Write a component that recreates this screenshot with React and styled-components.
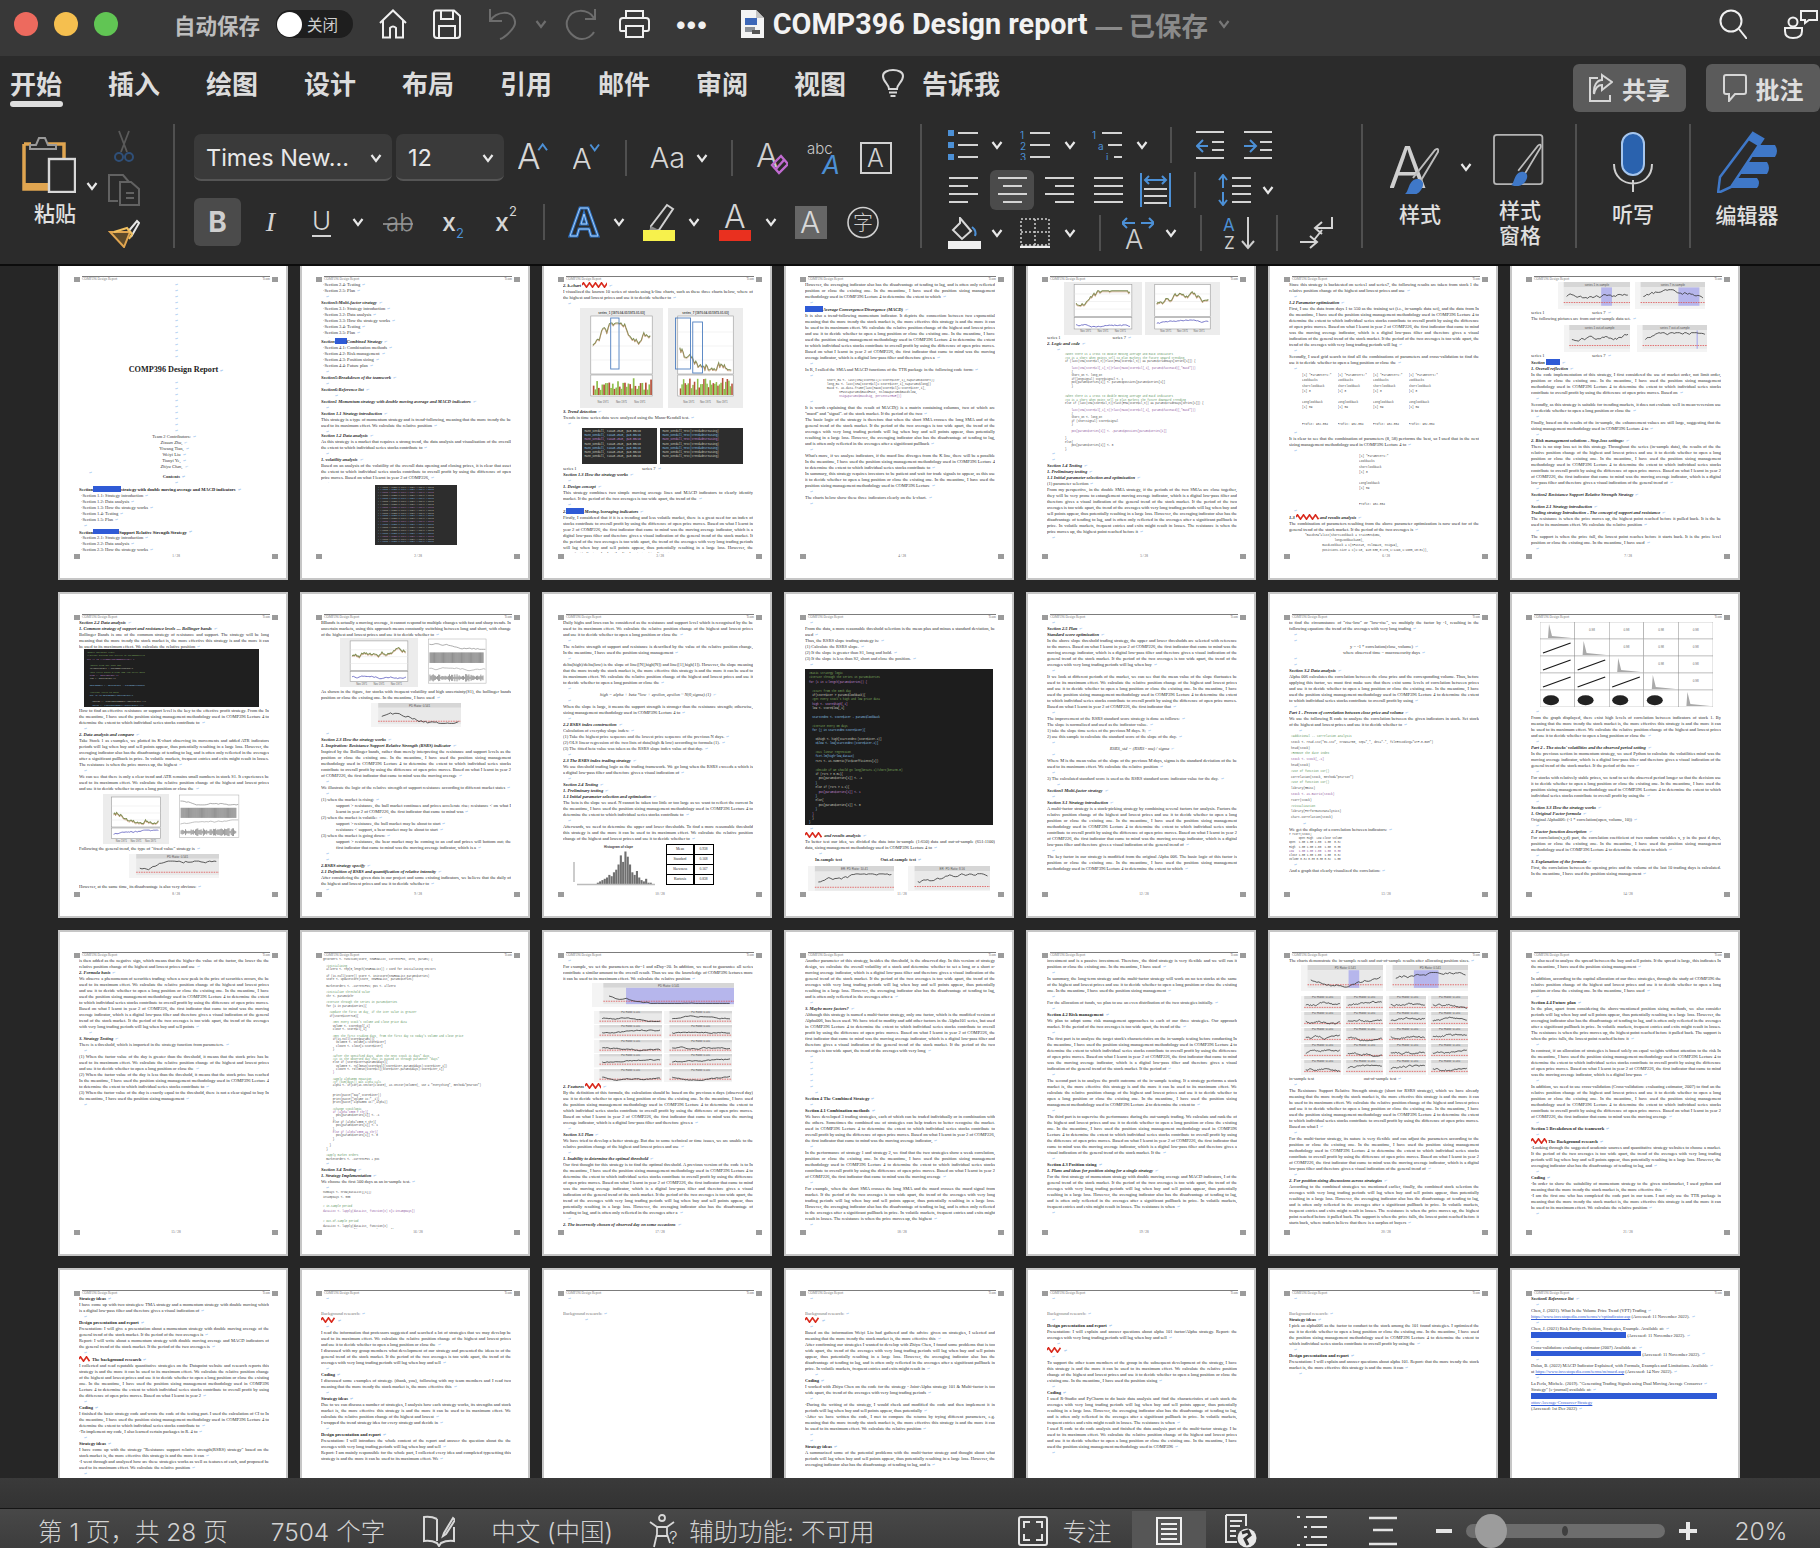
import React from 'react'
import styled, { createGlobalStyle } from 'styled-components'

const GlobalStyle = createGlobalStyle`
  html, body { margin: 0; padding: 0; background: #262626; }
  body { width: 1820px; height: 1548px; overflow: hidden; font-family: Inter, "Noto Sans CJK SC", sans-serif; }
`

/* ---------- window chrome ---------- */
const Shell = styled.div`
  width: 1820px;
  height: 1548px;
  display: flex;
  flex-direction: column;
  overflow: hidden;
  color: #e4e4e4;
`
const TitleBar = styled.div`
  height: 56px;
  box-sizing: border-box;
  padding-bottom: 8px;
  flex: none;
  display: flex;
  align-items: center;
  background: #383838;
`
const Light = styled.span`
  width: 24px;
  height: 24px;
  flex: none;
  border-radius: 50%;
  margin-left: ${p => p.$ml}px;
  background: ${p => p.$c};
`
const AutoSave = styled.span`
  margin-left: 56px;
  flex: none;
  font-size: 21.5px;
  font-weight: 700;
  white-space: nowrap;
  color: #bdbdbd;
`
const Toggle = styled.div`
  margin-left: 16px;
  width: 77px;
  height: 28px;
  flex: none;
  border-radius: 14px;
  background: #1e1e1e;
  display: flex;
  align-items: center;
  font-size: 15.5px;
  white-space: nowrap;
  color: #cfcfcf;
  &::before {
    content: '';
    width: 25px;
    height: 25px;
    border-radius: 50%;
    background: #fff;
    margin: 0 5px 0 1px;
  }
`
const DocTitle = styled.span`
  margin-left: 9px;
  flex: none;
  font-family: Roboto, Inter, sans-serif;
  font-size: 28.8px;
  font-weight: 700;
  color: #f2f2f2;
  white-space: nowrap;
`
const Saved = styled.span`
  margin-left: 8px;
  flex: none;
  font-size: 26.5px;
  font-weight: 700;
  color: #8a8a8a;
  white-space: nowrap;
`
const Dots = styled.span`
  margin-left: 26px;
  flex: none;
  font-size: 24px;
  font-weight: 900;
  letter-spacing: 1px;
  color: #f0f0f0;
  line-height: 1;
`
const Tabs = styled.div`
  height: 56px;
  box-sizing: border-box;
  padding: 0 0 4px 10px;
  flex: none;
  display: flex;
  align-items: center;
  background: #2b2b2b;
`
const Tab = styled.div`
  position: relative;
  width: 53px;
  margin-left: ${p => p.$ml ?? 0}px;
  margin-right: ${p => p.$mr ?? 45}px;
  font-size: 26px;
  font-weight: 700;
  white-space: nowrap;
  color: #dcdcdc;
  ${p => p.$active && `
    &::after {
      content: '';
      position: absolute;
      left: 0;
      right: 0;
      top: 37px;
      height: 6px;
      border-radius: 3px;
      background: #dedede;
    }
  `}
`
const HeadButton = styled.div`
  width: ${p => p.$w}px;
  height: 48px;
  margin-left: ${p => p.$ml}px;
  margin-top: 8px;
  align-self: flex-start;
  border-radius: 6px;
  background: #5b5b5b;
  display: flex;
  align-items: center;
  justify-content: center;
  gap: 9px;
  font-size: 24px;
  font-weight: 700;
  color: #dedede;
  flex: none;
`
const Ribbon = styled.div`
  height: 152px;
  flex: none;
  display: flex;
  padding-top: 12px;
  box-sizing: border-box;
  background: #2b2b2b;
`
const Group = styled.div`
  width: ${p => p.$w}px;
  flex: none;
  height: 124px;
  display: flex;
  flex-direction: ${p => (p.$row ? 'row' : 'column')};
`
const Sep = styled.div`
  width: 2px;
  flex: none;
  height: ${p => p.$h ?? 124}px;
  margin-left: ${p => p.$ml ?? 0}px;
  background: #505050;
`
const ToolRow = styled.div`
  display: flex;
  align-items: center;
  height: ${p => p.$h}px;
  margin-top: ${p => p.$mt ?? 0}px;
  padding-left: ${p => p.$pl ?? 0}px;
`
const Tool = styled.div`
  width: ${p => p.$w}px;
  height: ${p => (p.$hh ? p.$hh + 'px' : 'auto')};
  flex: none;
  margin-left: ${p => p.$ml ?? 0}px;
  display: flex;
  align-items: center;
  justify-content: center;
  border-radius: 6px;
  background: ${p => (p.$on ? '#4b4b4b' : 'transparent')};
  & > svg { display: block; }
`
const UnderTool = styled(Tool)`
  border-bottom: 2px solid #d4d4d4;
  border-radius: 0;
  padding-bottom: 1px;
`
const Select = styled.div`
  width: ${p => p.$w}px;
  height: 47px;
  box-sizing: border-box;
  flex: none;
  margin-left: ${p => p.$ml ?? 0}px;
  padding: 2px 10px 0 12px;
  border-radius: 7px;
  background: #3a3a3a;
  border-bottom: 2px solid #555;
  display: flex;
  align-items: center;
  justify-content: space-between;
  font-size: 23.5px;
  color: #e8e8e8;
  white-space: nowrap;
`
const Glyph = styled.span`
  font-family: ${p => (p.$serif ? '"Liberation Serif", serif' : 'Inter, sans-serif')};
  font-size: ${p => p.$s}px;
  font-weight: ${p => p.$fw ?? 300};
  font-style: ${p => (p.$it ? 'italic' : 'normal')};
  color: ${p => p.$c ?? '#d6d6d6'};
  line-height: 1;
  white-space: nowrap;
`
const BigLabel = styled.div`
  font-size: 21px;
  line-height: 25px;
  font-weight: 500;
  text-align: center;
  margin-left: ${p => p.$ml ?? 0}px;
  color: #e0e0e0;
`
const BigCol = styled.div`
  width: ${p => p.$w}px;
  margin-left: ${p => p.$ml ?? 0}px;
  padding-top: ${p => p.$pt ?? 0}px;
  display: flex;
  flex-direction: column;
  align-items: ${p => (p.$start ? 'flex-start' : 'center')};
  gap: ${p => p.$gap ?? 10}px;
`

/* ---------- document grid ---------- */
const Viewport = styled.div`
  height: 1212px;
  flex: none;
  overflow: hidden;
  border-top: 2px solid #0c0c0c;
  background: #262626;
`
const PageGrid = styled.div`
  display: grid;
  grid-template-columns: repeat(7, 230px);
  grid-auto-rows: 326px;
  gap: 12px;
  margin: -12px 0 0 58px;
`
const PageSheet = styled.div`
  box-sizing: border-box;
  height: 326px;
  display: flex;
  flex-direction: column;
  padding: 20px 8px 19px 14px;
  background: #fff;
  border: 2px solid #c6c6c6;
  font-family: "Liberation Serif", serif;
  font-size: 4.5px;
  line-height: 6px;
  color: #2a2a2a;
`
const PageHead = styled.div`
  height: 5px;
  flex: none;
  display: flex;
  align-items: flex-start;
  justify-content: space-between;
  border-top: 1px solid #7c7c7c;
  margin: 0 3px;
  font-size: 3.4px;
  line-height: 5px;
  color: #777;
`
const Corner = styled.span`
  width: 6px;
  height: 5px;
  flex: none;
  background: #9b9b9b;
`
const HeadWrap = styled.div`
  display: flex;
  align-items: flex-end;
  flex: none;
`
const HeadInner = styled.div`
  flex: 1;
  margin: 0 -1px;
`
const PageBody = styled.div`
  flex: 1;
  overflow: hidden;
  margin: 0 9px 0 5px;
  min-height: 0;
`
const PageFoot = styled.div`
  flex: none;
  height: 6px;
  display: flex;
  align-items: center;
  justify-content: space-between;
  font-size: 3.4px;
  color: #666;
`
const Para = styled.div`
  text-align: justify;
  color: #2c2c2c;
  margin-left: ${p => p.$ml ?? 0}px;
`
const Empty = styled.div`
  height: ${p => p.$h ?? 6}px;
  overflow: hidden;
  padding-left: ${p => p.$pl ?? 3}px;
  text-align: ${p => (p.$center ? 'center' : 'left')};
`
const RetMark = styled.span`
  color: #9dc4ee;
  font-size: 3.6px;
  margin-left: 2px;
`
const Head = styled.div`
  font-weight: 700;
  font-style: ${p => (p.$plain ? 'normal' : 'italic')};
  color: #1e1e1e;
  white-space: nowrap;
  &::before {
    content: '';
    display: inline-block;
    width: 2.4px;
    height: 2.4px;
    margin: 0 1px 0.5px -3.4px;
    background: #000;
  }
`
const Sub = styled.div`
  font-weight: 700;
  font-style: ${p => (p.$plain ? 'normal' : 'italic')};
  color: #2a2a2a;
  white-space: nowrap;
`
const Line = styled.div`
  white-space: nowrap;
  color: ${p => p.$c ?? '#333'};
  padding-left: ${p => p.$pl ?? 0}px;
  text-align: ${p => p.$align ?? 'left'};
  font-style: ${p => (p.$it ? 'italic' : 'normal')};
  font-weight: ${p => p.$fw ?? 400};
`
const Link = styled.div`
  white-space: nowrap;
  color: #2f5bd6;
  text-decoration: underline;
`
const Title = styled.div`
  text-align: center;
  font-size: 8.2px;
  line-height: 12px;
  font-weight: 700;
  color: #1c1c1c;
  margin: 4px 0 3px 4px;
`
const Sel = styled.span`
  display: inline-block;
  width: ${p => p.$w}px;
  height: 5.5px;
  vertical-align: -1px;
  background: #2f5bd6;
`
const FigRow = styled.div`
  display: flex;
  justify-content: ${p => p.$justify ?? 'center'};
  align-items: ${p => p.$align ?? 'flex-start'};
  gap: ${p => p.$gap ?? 2}px;
  margin: ${p => p.$m ?? '0'};
  & > svg { display: block; flex: none; }
`
const DarkBox = styled.div`
  width: ${p => p.$w}px;
  height: ${p => p.$h}px;
  flex: none;
  box-sizing: border-box;
  overflow: hidden;
  padding: ${p => p.$pad ?? '2px 3px'};
  background: ${p => p.$bg ?? '#2d2d2d'};
  font-family: "Liberation Mono", monospace;
  font-size: ${p => p.$fs ?? 2.6}px;
  line-height: ${p => p.$lh ?? 3.4}px;
  white-space: pre;
  color: #c8c8c8;
`
const CodeLine = styled.div`
  color: ${p => p.$c};
  height: ${p => p.$lh}px;
`
const LightCode = styled.div`
  font-family: "Liberation Mono", monospace;
  font-size: ${p => p.$fs ?? 2.9}px;
  line-height: ${p => p.$lh ?? 4.8}px;
  white-space: pre;
  padding-left: ${p => p.$pl ?? 12}px;
  overflow: hidden;
`
const MiniGrid = styled.div`
  display: grid;
  grid-template-columns: repeat(2, ${p => p.$w}px);
  gap: ${p => p.$gap ?? 1}px ${p => p.$cgap ?? 2}px;
  margin-top: ${p => p.$mt ?? 0}px;
`
const TableBox = styled.div`
  display: grid;
  grid-template-columns: 26px 18px;
  border: 1.5px solid #000;
  background: #000;
  gap: 1.5px;
  font-size: 3.6px;
  line-height: 8.6px;
  text-align: center;
  & > span { background: #fff; }
`

/* ---------- status bar ---------- */
const GreyGap = styled.div`
  height: 30px;
  flex: none;
  background: linear-gradient(#3a3a3a, #333);
  border-bottom: 1px solid #151515;
`
const StatusBar = styled.div`
  flex: 1;
  display: flex;
  align-items: center;
  padding-top: 2px;
  background: linear-gradient(#484848, #3c3c3c);
  font-size: 24.5px;
  font-weight: 300;
  color: #d2d2d2;
  white-space: nowrap;
`
const StatusText = styled.span`
  margin-left: ${p => p.$ml}px;
`
const StatusIcon = styled.span`
  margin-left: ${p => p.$ml}px;
  display: flex;
  & > svg { display: block; }
`
const ViewOn = styled.div`
  margin-left: 21px;
  width: 74px;
  height: 39px;
  background: #565656;
  display: flex;
  align-items: center;
  justify-content: center;
`
const Slider = styled.div`
  position: relative;
  margin-left: 14px;
  width: 199px;
  height: 14px;
  border-radius: 7px;
  background: #6d6d6d;
  &::before {
    content: '';
    position: absolute;
    left: 9px;
    top: -10px;
    width: 32px;
    height: 34px;
    border-radius: 50%;
    background: #9c9c9c;
  }
  &::after {
    content: '';
    position: absolute;
    left: 96px;
    top: 2px;
    width: 6px;
    height: 10px;
    border-radius: 50%;
    background: #3f3f3f;
  }
`

/* ---------- small drawings ---------- */
const Svg = ({ w, h, children, c = '#e4e4e4', sw = 2, vb }) => (
  <svg width={w} height={h} viewBox={vb ?? `0 0 ${w} ${h}`} fill="none" stroke={c} strokeWidth={sw}>
    {children}
  </svg>
)
const Chev = ({ ml = 0, c = '#e8e8e8' }) => (
  <Tool $w={12} $ml={ml}>
    <Svg w={12} h={10} c={c} sw={2.2}><path d="M1.5 2 L6 8 L10.5 2" /></Svg>
  </Tool>
)
const HomeIcon = () => (
  <Svg w={28} h={30} c="#f0f0f0"><path d="M1 14 L14 1.5 L27 14 M4 11 V28.5 H11 V19 Q14 16 17 19 V28.5 H24 V11" /></Svg>
)
const SaveIcon = () => (
  <Svg w={28} h={30} c="#f0f0f0"><path d="M3 1.5 H21 L27 7 V26 Q27 29 24 29 H4 Q1 29 1 26 V4 Q1 1.5 3 1.5 Z M8 2 V10 H20 V2 M6 29 V17 H22 V29" /></Svg>
)
const UndoIcon = () => (
  <Svg w={28} h={32} c="#6d6d6d"><path d="M1 1 V13 H13 M1 13 C6 3 25 1 26 14 C27 20 15 30 11 31" /></Svg>
)
const RedoIcon = () => (
  <Svg w={32} h={32} c="#6d6d6d"><path d="M30 1 V11 H20 M29 10 C24 1 6 -1 2 13 C0 23 10 31 17 31 C22 31 27 28 29 24" /></Svg>
)
const PrintIcon = () => (
  <Svg w={31} h={28} c="#f0f0f0"><path d="M7 8 V1 H24 V8 M7 21 H2 Q1 21 1 19 V11 Q1 8 4 8 H27 Q30 8 30 11 V19 Q30 21 28 21 H24 M7 16 H24 V27 H7 Z" /></Svg>
)
const DocIcon = () => (
  <svg width="24" height="28" viewBox="0 0 24 28">
    <path d="M1 0 H16 L24 8 V28 H1 Z" fill="#f4f4f4" />
    <path d="M16 0 V8 H24 Z" fill="#c4c4c4" />
    <rect x="5" y="8" width="12" height="7" fill="#3c67b8" />
    <rect x="5" y="17" width="10" height="5" fill="#8a8f96" />
    <rect x="12" y="20" width="8" height="4" fill="#555" />
  </svg>
)
const SearchIcon = () => (
  <Svg w={28} h={30} c="#f0f0f0"><circle cx="12" cy="12" r="10.5" /><path d="M20 20 L28 30" /></Svg>
)
const PeopleIcon = () => (
  <Svg w={37} h={30} c="#f0f0f0">
    <circle cx="9" cy="13" r="4.5" /><path d="M1 19 H18 V22 Q18 29 9 29 Q1 29 1 22 Z" />
    <path d="M17 2 H33 V11 H25 L21 14 V11 H17 Z" />
  </Svg>
)
const BulbIcon = () => (
  <Svg w={22} h={30} c="#d8d8d8"><path d="M7 22 C7 17 1 15 1 9 C1 1 21 1 21 9 C21 15 15 17 15 22 Z M7 25.5 H15 M8.5 29 H13.5" /></Svg>
)
const ShareIcon = () => (
  <Svg w={24} h={30} c="#d6d6d6"><path d="M9 5 H1 V28 H21 V22 M13 2 L23 9 L13 17 V12 C8 12 6 16 5 21 C4 13 8 7 13 7 Z" /></Svg>
)
const CommentIcon = () => (
  <Svg w={24} h={28} c="#d6d6d6"><path d="M3 1 H21 Q23 1 23 3 V18 Q23 20 21 20 H12 L6 27 V20 H3 Q1 20 1 18 V3 Q1 1 3 1 Z" /></Svg>
)
const PasteIcon = () => (
  <svg width="54" height="58" viewBox="0 0 54 58" fill="none">
    <path d="M2 9 H9 M26 9 H42 V24 M2 9 V54 H26" stroke="#e0a550" strokeWidth="3.5" />
    <path d="M2 48 H26 V54 H2 Z" fill="#e0a550" />
    <path d="M8 14 H34 V10 H26 L23 3 H17 L14 10 H8 Z" stroke="#9a9a9a" strokeWidth="2" />
    <rect x="27" y="24" width="26" height="33" stroke="#d8d8d8" strokeWidth="2.4" />
  </svg>
)
const ScissorsIcon = () => (
  <svg width="20" height="32" viewBox="0 0 20 32" fill="none">
    <path d="M5 1 L13 22 M15 1 L7 22" stroke="#5a5a5a" strokeWidth="1.8" />
    <circle cx="5" cy="27" r="4" stroke="#2f4f78" strokeWidth="2" />
    <circle cx="15" cy="27" r="4" stroke="#2f4f78" strokeWidth="2" />
  </svg>
)
const CopyIcon = () => (
  <Svg w={32} h={32} c="#626262"><path d="M11 1 H1 V27 H10 M11 1 H15 L21 8 V8 M12 8 H23 L31 15 V31 H12 Z M18 19 H26 M18 24 H26" /></Svg>
)
const BrushIcon = () => (
  <svg width="32" height="30" viewBox="0 0 32 30" fill="none">
    <path d="M19 15 L29 3 L31 5 L23 19" stroke="#e8e8e8" strokeWidth="2" />
    <path d="M2 14 L22 14 L16 29 Z" stroke="#e0a550" strokeWidth="2" fill="#5e4a2a" />
    <path d="M6 14 L19 10 L24 16 L21 21" stroke="#f0c060" strokeWidth="2" />
  </svg>
)
const GrowIcon = ({ w, s, up }) => (
  <svg width={w} height="40" viewBox={`0 0 ${w} 40`} fill="none">
    <text x="-1" y="31" fontFamily="Inter, sans-serif" fontWeight="300" fontSize={s} fill="#d6d6d6">A</text>
    <path d={up ? `M${w - 10} 12 L${w - 5.5} 6 L${w - 1} 12` : `M${w - 10} 6 L${w - 5.5} 12 L${w - 1} 6`} stroke="#4c90d6" strokeWidth="2" />
  </svg>
)
const ClearIcon = () => (
  <svg width="32" height="34" viewBox="0 0 32 34" fill="none">
    <text x="0" y="26" fontFamily="Inter, sans-serif" fontWeight="300" fontSize="33" fill="#cfcfcf">A</text>
    <path d="M16 24 L25 15 L32 23 L23 32 Z" stroke="#c06bd0" strokeWidth="2.4" />
    <path d="M20 28 L28 19" stroke="#c06bd0" strokeWidth="2.4" />
  </svg>
)
const AbcIcon = () => (
  <svg width="36" height="34" viewBox="0 0 36 34" fill="none">
    <text x="0" y="13" fontFamily="Inter, sans-serif" fontWeight="300" fontSize="15" fill="#c8c8c8">abc</text>
    <text x="15" y="33" fontFamily="Inter, sans-serif" fontStyle="italic" fontWeight="400" fontSize="26" fill="#4c90d6">A</text>
  </svg>
)
const BoxA = () => (
  <svg width="32" height="32" viewBox="0 0 32 32" fill="none">
    <rect x="1" y="1" width="30" height="30" stroke="#d2d2d2" strokeWidth="2" />
    <text x="7" y="25" fontFamily="Inter, sans-serif" fontWeight="300" fontSize="25" fill="#d2d2d2">A</text>
  </svg>
)
const StrikeAb = () => (
  <svg width="30" height="24" viewBox="0 0 30 24" fill="none">
    <text x="3" y="21" fontFamily="Inter, sans-serif" fontWeight="300" fontSize="24" fill="#8f8f8f">ab</text>
    <path d="M0 14 H30" stroke="#9a9a9a" strokeWidth="1.6" />
  </svg>
)
const ScriptX = ({ up }) => (
  <svg width="24" height="34" viewBox="0 0 24 34">
    <text x="0" y="26" fontFamily="Inter, sans-serif" fontWeight="500" fontSize="25" fill="#d6d6d6">x</text>
    <text x="14" y={up ? 11 : 33} fontFamily="Inter, sans-serif" fontSize="13" fill={up ? '#d6d6d6' : '#4c90d6'}>2</text>
  </svg>
)
const BlueA = () => (
  <svg width="32" height="32" viewBox="0 0 32 32" fill="none">
    <path d="M2 30 L12 2 H20 L30 30 H23 L21 23 H11 L9 30 Z M13 18 H19 L16 8 Z" stroke="#2f72c4" strokeWidth="3" />
    <path d="M2 30 L12 2 H20 L30 30 H23 L21 23 H11 L9 30 Z M13 18 H19 L16 8 Z" stroke="#a6ccf2" strokeWidth="1" />
  </svg>
)
const MarkerIcon = () => (
  <svg width="32" height="38" viewBox="0 0 32 38" fill="none">
    <path d="M8 23 L24 2 L30 6 L16 27 L8 27 Z" stroke="#d0d0d0" strokeWidth="2" />
    <path d="M8 23 L16 27 L10 30 L5 30 Z" fill="#8a8a8a" />
    <rect x="0" y="27" width="32" height="11" fill="#f7f14c" stroke="none" />
  </svg>
)
const RedA = () => (
  <svg width="32" height="38" viewBox="0 0 32 38">
    <text x="5" y="25" fontFamily="Inter, sans-serif" fontWeight="300" fontSize="32" fill="#d6d6d6">A</text>
    <rect x="0" y="27" width="32" height="11" fill="#e9301f" />
  </svg>
)
const GreyA = () => (
  <svg width="32" height="33" viewBox="0 0 32 33">
    <rect width="32" height="33" fill="#666" />
    <text x="5" y="27" fontFamily="Inter, sans-serif" fontWeight="300" fontSize="30" fill="#d8d8d8">A</text>
  </svg>
)
const CharCircle = () => (
  <svg width="32" height="33" viewBox="0 0 32 33" fill="none">
    <circle cx="16" cy="16.5" r="15" stroke="#cfcfcf" strokeWidth="1.6" />
    <text x="6" y="24" fontFamily='"Noto Sans CJK SC", sans-serif' fontWeight="300" fontSize="20" fill="#cfcfcf">字</text>
  </svg>
)
const Rows = ({ x1 = 14, x2 = 30, ys = [3, 15, 27], c = '#d4d4d4' }) => (
  <path d={ys.map(y => `M${x1} ${y} H${x2}`).join(' ')} stroke={c} strokeWidth="2" />
)
const SmallText = ({ x, y, t, s = 10 }) => (
  <text x={x} y={y} fontFamily="Inter, sans-serif" fontSize={s} fill="#4c90d6" stroke="none">{t}</text>
)
const BulletsIcon = () => (
  <svg width="30" height="30" fill="none">
    <path d="M0 0 H6 V6 H0 Z M0 12 H6 V18 H0 Z M0 24 H6 V30 H0 Z" fill="#4c90d6" />
    <Rows x1={10} />
  </svg>
)
const NumbersIcon = () => (
  <svg width="30" height="30" fill="none">
    <SmallText x={0} y={9} t="1" /><SmallText x={0} y={20} t="2" /><SmallText x={0} y={31} t="3" />
    <Rows x1={10} />
  </svg>
)
const MultiIcon = () => (
  <svg width="30" height="30" fill="none">
    <SmallText x={0} y={9} t="1" /><SmallText x={6} y={20} t="a" /><SmallText x={14} y={31} t="i" />
    <path d="M10 3 H30 M16 15 H30 M22 27 H30" stroke="#d4d4d4" strokeWidth="2" />
  </svg>
)
const IndentIcon = ({ flip }) => (
  <svg width="28" height="30" fill="none">
    <path d="M0 2 H28 M16 12 H28 M16 20 H28 M0 28 H28" stroke="#d4d4d4" strokeWidth="2" />
    <path d={flip ? 'M0 16 H11 M6 10 L12 16 L6 22' : 'M12 16 H1 M7 10 L1 16 L7 22'} stroke="#4c90d6" strokeWidth="2" />
  </svg>
)
const AlignIcon = ({ mode }) => {
  const rows = {
    left: 'M0 4 H29 M0 12 H19 M0 20 H29 M0 28 H19',
    center: 'M0 4 H29 M5 12 H24 M0 20 H29 M5 28 H24',
    right: 'M0 4 H29 M10 12 H29 M0 20 H29 M10 28 H29',
    full: 'M0 4 H29 M0 12 H29 M0 20 H29 M0 28 H29',
  }
  return <svg width="29" height="32" fill="none"><path d={rows[mode]} stroke="#d4d4d4" strokeWidth="2" /></svg>
}
const DistIcon = () => (
  <svg width="31" height="34" fill="none">
    <path d="M1 0 V34 M30 0 V34" stroke="#4c90d6" strokeWidth="2" />
    <path d="M5 7 H26 M9 3 L5 7 L9 11 M22 3 L26 7 L22 11" stroke="#4c90d6" strokeWidth="2" />
    <path d="M4 16 H27 M4 23 H27 M4 30 H27" stroke="#d4d4d4" strokeWidth="2" />
  </svg>
)
const SpacingIcon = () => (
  <svg width="33" height="32" fill="none">
    <path d="M14 4 H33 M14 12 H33 M14 20 H33 M14 28 H33" stroke="#d4d4d4" strokeWidth="2" />
    <path d="M5 1 V14 M1 6 L5 1 L9 6 M5 18 V31 M1 26 L5 31 L9 26" stroke="#4c90d6" strokeWidth="2" />
  </svg>
)
const FillIcon = () => (
  <svg width="33" height="32" fill="none">
    <path d="M12 1 L23 14 L14 22 L5 13 L12 6 Z" stroke="#d8d8d8" strokeWidth="2" />
    <path d="M24 10 Q29 14 27 19" stroke="#4c90d6" strokeWidth="2" />
    <rect y="24" width="33" height="8" fill="#efefef" />
  </svg>
)
const BordersIcon = () => (
  <svg width="30" height="30" fill="none">
    <rect x="1" y="1" width="28" height="26" stroke="#cfcfcf" strokeWidth="1.5" strokeDasharray="2 2" />
    <path d="M15 1 V27 M1 14 H29" stroke="#cfcfcf" strokeWidth="1.5" strokeDasharray="2 2" />
    <path d="M0 29 H30" stroke="#f0f0f0" strokeWidth="2.5" />
  </svg>
)
const DirIcon = () => (
  <svg width="32" height="32" fill="none">
    <path d="M1 6 H13 M5 1 L0 6 L5 11 M19 6 H31 M27 1 L32 6 L27 11" stroke="#4c90d6" strokeWidth="2" />
    <text x="3" y="32" fontFamily="Inter, sans-serif" fontWeight="300" fontSize="27" fill="#cfcfcf">A</text>
  </svg>
)
const SortIcon = () => (
  <svg width="33" height="34" fill="none">
    <text x="0" y="15" fontFamily="Inter, sans-serif" fontSize="17" fill="#4c90d6">A</text>
    <text x="1" y="33" fontFamily="Inter, sans-serif" fontSize="17" fill="#cfcfcf">Z</text>
    <path d="M25 1 V32 M19 25 L25 32 L31 25" stroke="#cfcfcf" strokeWidth="2" />
  </svg>
)
const RtlIcon = () => (
  <svg width="33" height="34" fill="none">
    <path d="M32 1 V12 H16 M22 6 L15 12 L22 18 M0 26 H16 M10 20 L17 26 L10 32 M22 14 L14 24" stroke="#d4d4d4" strokeWidth="2" />
  </svg>
)
const Brush = ({ x = 0, y = 0 }) => (
  <g transform={`translate(${x} ${y})`} fill="none">
    <path d="M8 30 L30 2 Q34 -1 33 4 L15 34" stroke="#bdbdbd" strokeWidth="2" />
    <path d="M0 46 C4 44 3 32 12 31 C18 31 20 36 16 42 C12 48 5 48 0 46 Z" fill="#3f78c8" />
  </g>
)
const StylesIcon = () => (
  <svg width="60" height="56" viewBox="0 0 60 56" fill="none">
    <text x="-2" y="50" fontFamily="Inter, sans-serif" fontWeight="300" fontSize="58" fill="#cfcfcf">A</text>
    <Brush x={15} y={10} />
  </svg>
)
const PaneIcon = () => (
  <svg width="60" height="58" viewBox="0 0 60 58" fill="none">
    <rect x="1" y="1" width="54" height="55" rx="3" stroke="#b4b4b4" strokeWidth="2" />
    <Brush x={20} y={11} />
  </svg>
)
const MicIcon = () => (
  <svg width="40" height="60" viewBox="0 0 40 60" fill="none">
    <rect x="9" y="1" width="22" height="42" rx="11" fill="#2a62ae" stroke="#a6c6ee" strokeWidth="2" />
    <path d="M1 32 C1 58 39 58 39 32 M20 48 V60" stroke="#cfcfcf" strokeWidth="2" />
  </svg>
)
const EditorIcon = () => (
  <svg width="60" height="62" viewBox="0 0 60 62" fill="none">
    <path d="M34 14 H58 Q62 20 58 26 H28 Z M26 31 H50 Q54 37 50 43 H20 Z M18 47 H40 Q44 52 40 57 H14 Z" fill="#3f78c8" />
    <path d="M36 2 L46 8 L14 56 L1 62 L3 46 Z" fill="#2b2b2b" stroke="#3f78c8" strokeWidth="2.5" />
    <path d="M36 2 L46 8 L41 15 L31 9 Z" fill="#3f78c8" />
  </svg>
)
const BookIcon = () => (
  <Svg w={32} h={32} c="#d8d8d8"><path d="M14 4 Q8 1 1 2 V26 Q8 25 14 28 L16 31 L18 28 Q24 25 31 26 V12 M14 4 V26 M21 18 L30 3 L32 5 L23 19 L20 21 Z" /></Svg>
)
const AccessIcon = () => (
  <Svg w={32} h={34} c="#d8d8d8" sw={1.8}><circle cx="13" cy="4" r="3" /><path d="M1 8 L8 13 V20 L5 33 M25 8 L18 13 V20 L21 29 M8 13 H18 M8 22 H18" /><text x="20" y="30" fontFamily="Inter, sans-serif" fontSize="17" fill="#d8d8d8" stroke="none">?</text></Svg>
)
const FocusIcon = () => (
  <Svg w={30} h={30} c="#e4e4e4"><rect x="1" y="1" width="28" height="28" rx="2" /><path d="M6 12 V6 H12 M18 6 H24 V12 M6 18 V24 H12 M18 24 H24 V18" /></Svg>
)
const PrintView = () => (
  <Svg w={26} h={28} c="#f0f0f0"><rect x="1" y="1" width="24" height="26" /><path d="M5 7 H21 M5 12 H21 M5 17 H21 M5 22 H21" /></Svg>
)
const WebView = () => (
  <svg width="32" height="34" fill="none">
    <path d="M1 1 H21 V12 M1 1 V28 H12 M5 7 H17 M5 12 H15 M5 17 H11 M5 22 H11" stroke="#e4e4e4" strokeWidth="2" />
    <circle cx="22" cy="24" r="9.5" fill="#e8e8e8" />
    <path d="M17 19 L23 17 L25 21 L20 25 L23 31" stroke="#333" strokeWidth="3" />
  </svg>
)
const OutlineView = () => (
  <svg width="31" height="32" fill="none"><path d="M1 2 H4 M10 2 H31 M8 12 H11 M15 12 H31 M8 22 H11 M15 22 H31 M1 30 H4 M10 30 H31" stroke="#e4e4e4" strokeWidth="2" /></svg>
)
const DraftView = () => (
  <svg width="28" height="32" fill="none"><path d="M0 3 H28 M4 15 H24 M0 29 H28" stroke="#e4e4e4" strokeWidth="2.6" /></svg>
)

/* ---------- document figures ---------- */
const rng = seed => {
  let s = seed * 977 + 13
  return () => (s = (s * 9301 + 49297) % 233280) / 233280
}
const walk = (seed, n, x0, x1, y0, y1, drift = 0) => {
  const r = rng(seed)
  let v = 0.5
  const out = []
  for (let i = 0; i < n; i++) {
    v += (r() - 0.5) * 0.2 + drift / n
    v = Math.min(0.98, Math.max(0.02, v))
    out.push([x0 + ((x1 - x0) * i) / (n - 1), y1 - (y1 - y0) * v])
  }
  return out
}
const pts = list => list.map(a => `${a[0].toFixed(1)},${a[1].toFixed(1)}`).join(' ')

const Candle = ({ w, h, seed, boxes = [], title, tone = 'rg', vol = 'bars' }) => {
  const plotX = w * 0.13
  const plotW = w * 0.74
  const top = h * 0.1
  const mid = h * 0.66
  const line = walk(seed, 46, plotX + 2, plotX + plotW - 2, top + 4, mid - 3, 0.2)
  const r = rng(seed + 5)
  const bars = []
  for (let i = 0; i < 34; i++) {
    const bx = plotX + 2 + (i * (plotW - 4)) / 33
    const bh = (0.3 + r() * 0.7) * (h * 0.17)
    bars.push(<rect key={i} x={bx} y={h * 0.87 - bh} width={plotW / 36} height={bh} fill={tone === 'rg' ? (i % 3 ? '#8fbe4c' : '#b4503a') : '#8f8fd0'} />)
  }
  const volLine = walk(seed + 3, 40, plotX + 2, plotX + plotW - 2, h * 0.72, h * 0.87)
  return (
    <svg width={w} height={h} viewBox={`0 0 ${w} ${h}`}>
      <rect width={w} height={h} fill="#ececec" />
      <text x={w / 2} y={h * 0.06} textAnchor="middle" fontSize={3} fontFamily="Liberation Sans, sans-serif" fontWeight="700" fill="#444">{title}</text>
      <rect x={plotX} y={top - 2} width={plotW} height={mid - top + 2} fill="#fff" stroke="#9a9a9a" strokeWidth="0.6" />
      <rect x={plotX} y={mid + 1} width={plotW} height={h * 0.87 - mid} fill="#fff" stroke="#9a9a9a" strokeWidth="0.6" />
      {[0.25, 0.5, 0.75].map(f => <path key={f} d={`M${plotX} ${top + (mid - top) * f} H${plotX + plotW}`} stroke="#e4e4e4" strokeWidth="0.5" />)}
      <polyline points={pts(line)} fill="none" stroke="#7f8f55" strokeWidth="1.1" />
      <polyline points={pts(line.map(a => [a[0], a[1] + 1]))} fill="none" stroke="#c98a6a" strokeWidth="0.5" />
      {vol === 'bars' ? bars : <polyline points={pts(volLine)} fill="none" stroke="#6a6ac4" strokeWidth="0.9" />}
      {boxes.map(b => <rect key={b[0]} x={w * b[0]} y={h * b[1]} width={w * b[2]} height={h * b[3]} fill="none" stroke="#4f7fc0" strokeWidth="0.9" />)}
      {[0.2, 0.5, 0.8].map(f => <text key={f} x={plotX + plotW * f} y={h * 0.95} fontSize={2.6} textAnchor="middle" fill="#666" fontFamily="Liberation Sans, sans-serif">Nov 1971</text>)}
    </svg>
  )
}
const Backtest = ({ w, h, seed, band, drift = 0.3, label = 'PD Ratio: 0.541' }) => {
  const top = h * 0.2
  const line = walk(seed, 36, w * 0.12, w * 0.97, top + 2, h * 0.86, drift)
  return (
    <svg width={w} height={h} viewBox={`0 0 ${w} ${h}`} style={{ display: 'block' }}>
      <rect width={w} height={h} fill="#f4f4f4" />
      <rect x={w * 0.08} width={w * 0.92} height={top} fill="#d6d6d6" />
      <text x={w * 0.54} y={top * 0.75} fontSize={Math.min(3, top)} textAnchor="middle" fill="#555" fontFamily="Liberation Sans, sans-serif">{label}</text>
      <rect x={w * 0.08} y={top} width={w * 0.92} height={h * 0.68} fill="#e9e9e9" />
      {band && <rect x={w * band[0]} y={top} width={w * band[1]} height={h * 0.68} fill="#a9a9ec" opacity="0.8" />}
      <path d={`M${w * 0.08} ${h * 0.76} H${w}`} stroke="#e05050" strokeWidth="0.8" strokeDasharray="1.5 1" />
      <polyline points={pts(line)} fill="none" stroke="#333" strokeWidth="0.8" />
    </svg>
  )
}
const Indicators = ({ w, h, seed }) => {
  const r = rng(seed)
  const ticks = []
  for (let i = 0; i < 60; i++) {
    const x = w * 0.06 + (i * w * 0.82) / 60
    ticks.push(<path key={i} d={`M${x} ${h * 0.3} V${h * 0.52}`} stroke="#444" strokeWidth="0.55" />)
  }
  const lower = []
  for (let i = 0; i < 50; i++) {
    const x = w * 0.06 + (i * w * 0.82) / 50
    const t = 1 + r() * 3
    lower.push(<path key={i} d={`M${x} ${h * 0.83 - t} V${h * 0.83 + t}`} stroke="#333" strokeWidth="0.5" />)
  }
  return (
    <svg width={w} height={h} viewBox={`0 0 ${w} ${h}`}>
      <rect width={w} height={h} fill="#fff" />
      <rect x={w * 0.04} y="1" width={w * 0.87} height={h * 0.92} fill="none" stroke="#aaa" strokeWidth="0.5" />
      <polyline points={pts(walk(seed, 30, w * 0.05, w * 0.9, 2, h * 0.24))} fill="none" stroke="#777" strokeWidth="0.6" />
      {ticks}
      <polyline points={pts(walk(seed + 2, 30, w * 0.05, w * 0.9, h * 0.56, h * 0.72))} fill="none" stroke="#999" strokeWidth="0.6" />
      {lower}
    </svg>
  )
}
const Hist = ({ w, h }) => {
  const heights = [0, 0, 0, 0, 0, 0, 1, 2, 3, 4, 5, 7, 6, 9, 11, 15, 22, 17, 25, 21, 15, 9, 7, 10, 5, 3, 2, 4, 1, 1]
  return (
    <svg width={w} height={h} viewBox={`0 0 ${w} ${h}`}>
      <text x={w * 0.55} y="4" fontSize="3.2" fontWeight="700" textAnchor="middle" fill="#333" fontFamily="Liberation Sans, sans-serif">Histogram of slope</text>
      {heights.map((v, i) => <rect key={i} x={14 + i * 2.3} y={h - 8 - v * 1.3} width="2.1" height={v * 1.3} fill="#707070" />)}
      <path d={`M8 ${h - 7.5} H${w - 4}`} stroke="#bbb" strokeWidth="1.5" />
      <path d={`M5 ${h - 30} V${h - 10}`} stroke="#999" strokeWidth="1" />
    </svg>
  )
}
const Pairs = ({ w, h }) => {
  const cw = w / 5
  const ch = h / 5
  const cells = []
  for (let row = 0; row < 5; row++) {
    for (let col = 0; col < 5; col++) {
      const x = col * cw
      const y = row * ch
      cells.push(<rect key={`c${row}${col}`} x={x} y={y} width={cw} height={ch} fill="#fff" stroke="#888" strokeWidth="0.4" />)
      if (row === col) {
        cells.push(<path key={`d${row}`} d={`M${x + 3} ${y + ch - 1} L${x + 8} ${y + ch - 1} L${x + 9} ${y + 2} L${x + 12} ${y + ch - 3} L${x + cw - 3} ${y + ch - 1} Z`} fill="#aaa" />)
      } else if (row > col && row < 4) {
        cells.push(<path key={`s${row}${col}`} d={`M${x + 3} ${y + ch - 3} L${x + cw - 4} ${y + 4}`} stroke="#1a1a1a" strokeWidth="1.3" />)
      } else if (row === 4 && col < 4) {
        cells.push(<ellipse key={`e${col}`} cx={x + 11} cy={y + ch * 0.6} rx="8" ry="5" fill="#222" />)
      } else {
        cells.push(<text key={`t${row}${col}`} x={x + cw / 2} y={y + ch / 2} fontSize="3" textAnchor="middle" fill="#666" fontFamily="Liberation Sans, sans-serif">0.98</text>)
      }
    }
  }
  return <svg width={w} height={h} viewBox={`0 0 ${w} ${h}`}>{cells}</svg>
}
const Wave = ({ w = 24 }) => {
  let d = 'M0 3'
  for (let x = 0; x < w; x += 3) d += ` L${x + 1.5} ${x % 6 ? 5.2 : 0.8}`
  return (
    <svg width={w} height="6" viewBox={`0 0 ${w} 6`} style={{ verticalAlign: '-1px' }}>
      <path d={d} fill="none" stroke="#d9291c" strokeWidth="1.6" />
    </svg>
  )
}
const Dark = ({ w, h, bg, fs, lh, pad, lines }) => (
  <DarkBox $w={w} $h={h} $bg={bg} $fs={fs} $lh={lh} $pad={pad}>
    {lines.map((l, i) => <CodeLine key={i} $lh={lh ?? 3.4} $c={l.trim().startsWith('#') ? '#7fae5f' : i % 5 === 2 ? '#c58ad6' : i % 3 === 1 ? '#8cc4e8' : '#d4d4c4'}>{l}</CodeLine>)}
  </DarkBox>
)
const Light2 = ({ lines, pl, lh, fs }) => (
  <LightCode $pl={pl} $lh={lh} $fs={fs}>
    {lines.map((l, i) => <CodeLine key={i} $lh={lh ?? 4.8} $c={l.trim().startsWith('#') ? '#5f985f' : i % 6 === 4 ? '#8f5aa0' : '#4a4a4a'}>{l}</CodeLine>)}
  </LightCode>
)

/* ---------- document text ---------- */
const corpus = 'The strategy is trend-following, meaning that the more trendy the stock market is, the more effective this strategy is and the more it can be used to its maximum effect. We calculate the relative position change of the highest and lowest prices and use it to decide whether to open a long position or close the existing one. In the meantime, I have used the position sizing management methodology used in COMP396 Lecture 4 to determine the extent to which individual series stocks contribute to overall profit by using the difference of open price moves. Based on what I learnt in year 2 of COMP226, the first indicator that came to mind was the moving average indicator, which is a digital low-pass filter and therefore gives a visual indication of the general trend of the stock market. If the period of the two averages is too wide apart, the trend of the averages with very long trading periods will lag when buy and sell points appear, thus potentially resulting in a large loss. However, the averaging indicator also has the disadvantage of tending to lag, and is often only reflected in the averages after a significant pullback in price. In volatile markets, frequent entries and exits might result in losses. The resistance is when the price moves up, the highest point reached before it pulled back. The support is when the price falls, the lowest point reached before it starts back, where traders believe that there is a surplus of buyers and are making prices rebound. '
const CHARS = 104
const fill = (text, lines) => {
  const target = Math.round((lines - 0.35) * CHARS)
  let out = text
  let at = (text.length * 37) % 900
  while (out.length < target) {
    const rest = corpus.slice(at)
    const start = rest.indexOf(' ') + 1
    out += ' ' + rest.slice(start, start + target - out.length)
    at = 0
  }
  const cut = out.lastIndexOf(' ', target)
  return cut > 0 ? out.slice(0, cut) : out
}
const Ret = () => <RetMark>↵</RetMark>
const P = (t, n, ml) => <Para $ml={ml}>{fill(t, n)}<Ret /></Para>
const E = (pl, h) => <Empty $pl={typeof pl === 'number' ? pl : 3} $h={h}><RetMark>↵</RetMark></Empty>
const Ec = () => <Empty $center><RetMark>↵</RetMark></Empty>
const H = (...c) => React.createElement(Head, null, ...React.Children.toArray(c), <Ret key="r" />)
const HP = (...c) => React.createElement(Head, { $plain: true }, ...React.Children.toArray(c), <Ret key="r" />)
const S = (...c) => React.createElement(Sub, null, ...React.Children.toArray(c), <Ret key="r" />)
const SP = (...c) => React.createElement(Sub, { $plain: true }, ...React.Children.toArray(c), <Ret key="r" />)
const L = (t, props) => <Line {...props}>{t}<Ret /></Line>
const Lc = (t, it) => <Line $align="center" $it={it}>{t}<Ret /></Line>
const Lb = t => <Line $align="center" $fw={700}>{t}<Ret /></Line>
const sel = w => <Sel $w={w} />
const wave = w => <Wave w={w} />
const rep = (n, f) => Array.from({ length: n }, () => f())
const gap = n => '\u00a0'.repeat(n)
const Blank = () => <Line>{'\u00a0'}</Line>
const Research = () => [E(3, 3), <Blank />, <Blank />, L('Background research:', { $c: '#777' })]

const rStrategy = [
  '#Basic strategy logic',
  '#iterate through the series in params$series',
  'for (i in 1:length(params$series)) {',
  '',
  '  #start from the 60th day',
  '  if(store$iter > params$lookback){',
  '  #get every stock\'s high and low price data',
  '  high <- store$high[,i]',
  '  low <- store$low[,i]',
  '',
  '  startIndex <- store$iter - params$lookback',
  '',
  '  #iterate every 60 days',
  '  for (j in startIndex:store$iter){',
  '',
  '    x$high <- high[startIndex:(store$iter-1)]',
  '    x$low <- low[startIndex:(store$iter-1)]',
  '',
  '    #OLS linear regression',
  '    fit<-lm(high~low,data=x)',
  '    rsrs <- as.numeric(fit$coefficients[2])',
  '',
  '    #decide if we should go long(beta>1.1)/short(beta<0.8)',
  '    if (rsrs > 0.81){',
  '      pos[params$series[i]] <- -1',
  '    }',
  '    else if (rsrs > 1.1){',
  '      pos[params$series[i]] <- 1',
  '    }',
  '    else{',
  '      pos[params$series[i]] <- 0',
  '    }',
  '  }',
  '  }',
  '}',
]
const rMacd = [
  '#when there is a cross to double moving average and macd indicators',
  '#to is a short when points sell to plan markets the future upward trending',
  'if (last(SMA(store$cl,n))>last(EMA(store$cl,n)) && params$tradeDays[series[i]]) {',
  '',
  '    last(SMA(store$cl[,i],n))>last(MACD(store$cl[,i], params$fastMacd)[,"macd"]))',
  '    {',
  '    short_on <- long_on',
  '    if(longsignal) store$signal <- 1',
  '    pos[params$series[i]] <- params$posSizes[params$series[i]]',
  '    }',
  '',
  '',
  '#when there is a cross to double moving average and macd indicators',
  '#to is a short when point sell to plan markets the future downward trending',
  'else if (last(SMA(store$cl,n))<last(EMA(store$cl,n)) && params$tradeDays[series[i]]) {',
  '',
  '    last(SMA(store$cl[,i],n))<last(MACD(store$cl[,i], params$fastMacd)[,"macd"]))',
  '    {',
  '    short_on <- long_on',
  '    if (shortsignal) store$signal',
  '    }',
  '',
  '    pos[params$series[i]] <- -params$posSizes[params$series[i]]',
  '',
  '}',
  'else{',
  '    pos[params$series[i]] <- 0',
  '}',
]
const rOrders = [
  'getOrders <- function(store, newRowList, currentPos, info, params) {',
  '',
  '  #initializing',
  '  allzero <- rep(0,length(newRowList)) # used for initializing vectors',
  '',
  '  if (is.null(store)) store <- initStore(newRowList,params$series)',
  '  store <- updateStore(store, newRowList, params$series)',
  '',
  '  marketOrders <- -currentPos; pos <- allzero',
  '',
  '  #initialize threshold value',
  '  thr <- params$thr',
  '',
  '  #Iterate through the series in params$series',
  '  for (i in params$series){',
  '',
  '    #Update the first 10 day, if the iter value is greater',
  '    if(store$iter>10){',
  '',
  '      #Get every stock\'s volume and close price data',
  '      volume <- store$vol[,i]',
  '      close <- store$cl[,i]',
  '',
  '      #Get the first trading days, from the first day to today\'s volume and close price',
  '      if(is.null(store$params)){',
  '        volume3 <- volume[1:store$iter]',
  '        close3 <- close[1:store$iter]',
  '      }',
  '',
  '      #After the specified days, when the next stock is days" days',
  '      #it is the observed day that is passed in through parameter "days"',
  '      else if (store$iter>=params$days){',
  '        volume3 <- rollmean(store$vol[(store$iter-params$days):store$iter,i])',
  '        close3 <- rollmean(store$cl[(store$iter-params$days):store$iter,i])',
  '      }',
  '',
  '      #Apply alpha006 equation',
  '      #If (sum(days)) was alpha calc',
  '      alpha <- if(cor(as.vector(close3), as.vector(volume3), use = "everything", method="pearson")',
  '',
  '',
  '      print(paste("Day",store$iter))',
  '      print(paste("volume is:", i))',
  '      print(paste("alpha006 is:",alpha))',
  '',
  '      #Change Stocklogic',
  '      if (alpha*1000 > thr){',
  '        pos[params$series[i]] <- -1',
  '      }',
  '      else if (alpha*1000 < thr){',
  '        pos[params$series[i]] <- 1',
  '      }',
  '      else if (alpha*1000 == thr){',
  '        pos[params$series[i]] <- 0',
  '      }',
  '',
  '    }',
  '  }',
  '',
  '  #Apply market orders',
  '  marketOrders <- -currentPos + pos',
]
const bollCode = rStrategy.slice(0, 30).map(s => s.replace('rsrs', 'bbands'))
const sectionHeads = ['Strategy introduction', 'Data analysis', 'How the strategy works', 'Testing', 'Plan']
const Sec = ({ t }) => <Line $pl={2}>·{t}<Ret /></Line>
const toc = (n, count = 5) => sectionHeads.slice(0, count).map((t, i) => <Sec t={`Section ${n}.${i + 1}: ${t}`} />)
const CHART1 = 'series_1 [1970-04-01/1973-01-03]'
const CHART7 = 'series_7 [1970-04-01/1973-01-03]'
const ptable = [
  '[1] "Parameters:"',
  'Lookbacks',
  'Shortlookback',
  '[1] 8',
  '',
  'Longlookback',
  '[1] 59',
  '',
  '',
  'Profit: 932.854',
]
const SmallPanel = ({ seeds, w, h, gap: g, mt }) => (
  <MiniGrid $w={w} $gap={g} $mt={mt}>
    {seeds.map(s => <Backtest key={s} w={w} h={h} seed={s} drift={0.05} label="PD Ratio: 0.135" />)}
  </MiniGrid>
)

const pages = [
  /* 1 */ [
    ...rep(13, Ec), <Title>COMP396 Design Report<Ret /></Title>, ...rep(9, Ec),
    Lc('Team 2 Contributors:'), Lc('Zixuan Zhu,', true), Lc('Yiwang Tian,'), Lc('Weiyi Liu'), Lc('Tianyi Ye,'), Lc('Zhiyu Chen,', true),
    E(8, 4), Lb('Contents'), Ec(),
    HP('Section', sel(28), 'strategy with double moving average and MACD indicators'),
    ...toc(1), E(), HP('Section', sel(26), 'Support Relative Strength Strategy'), ...toc(2, 3),
  ],
  /* 2 */ [
    <Sec t="Section 2.4: Testing" />, <Sec t="Section 2.5: Plan" />, E(), S('Section3:Multi-factor strategy'), ...toc(3), E(3, 2),
    H('Section', sel(12), 'Combined Strategy'),
    <Sec t="Section 4.1: Combination methods" />, <Sec t="Section 4.2: Risk management" />, <Sec t="Section 4.3: Position sizing" />, <Sec t="Section 4.4: Future plan" />,
    E(), S('Section5:Breakdown of the teamwork'), E(), S('Section6:Reference list'), E(12), S('Section1 Momentum strategy with double moving average and MACD indicators'), E(),
    H('Section 1.1 Strategy introduction'), P('This strategy is a type of momentum strategy and is trend-following, meaning that the more trendy the', 2), E(3, 4),
    H('Section 1.2 Data analysis'), P('As this strategy is a market that requires a strong trend, the data analysis and visualisation of the overall', 2), E(),
    H('1. volatility analysis'), P('Based on an analysis of the volatility of the overall data opening and closing prices, it is clear that asset', 3), E(3, 2),
    <FigRow $m="2px 0 0 0"><Dark w={82} h={60} fs={1.9} lh={2.9} lines={rep(20, () => '1 1.00000 1.00307 0.99742 1.00311 1.00042 1.00018')} /></FigRow>,
  ],
  /* 3 */ [
    H('2. k-chart ', wave(25)), P('I visualized the known 10 series of stocks using k-line charts, such as these three charts below, where', 2), E(),
    <FigRow $gap={5} $m="1px 0 1px 6px">
      <Candle w={83} h={100} seed={3} title={CHART1} boxes={[[0.37, 0.1, 0.1, 0.51]]} />
      <Candle w={75} h={100} seed={8} title={CHART7} boxes={[[0.1, 0.1, 0.2, 0.51], [0.33, 0.14, 0.13, 0.51]]} />
    </FigRow>,
    H('3. Trend detection'), L('Trends in time series data were analyzed using the Mann-Kendall test.'), E(),
    <FigRow $gap={3} $m="1px 0 2px 8px">
      <Dark w={75} h={36} lh={4.2} fs={2.7} lines={rep(7, () => 'Mann_Kendall, tau=0.2543, p=0.00216')} />
      <Dark w={83} h={36} lh={4.2} fs={2.7} lines={rep(7, () => 'Mann_Kendall_Test(trend=decreasing)')} />
    </FigRow>,
    <Line>series 1{gap(58)}series 7<Ret /></Line>,
    H('Section 1.3 How the strategy works'), E(), H('1. Design concept'), P('This strategy combines two simple moving average lines and MACD indicators to clearly identify', 2), E(),
    H('2.', sel(18), 'Moving Averaging indicators'), P('Firstly, I considered that if it is a trending and less volatile market, there is a great need for an index of', 7),
  ],
  /* 4 */ [
    P('However, the averaging indicator also has the disadvantage of tending to lag, and is often only reflected', 3), E(),
    H(sel(18), 'Average Convergence/Divergence (MACD)'), P('It is also a trend-following momentum indicator. It depicts the connection between two exponential', 8), E(),
    L('In R, I called the SMA and MACD functions of the TTR package in the following code form:'), E(),
    <Light2 pl={22} lh={4.2} lines={['short_ma <- last(SMA(store$cl[1:store$iter,i],n=params$short))', 'long_ma <- last(SMA(store$cl[1:store$iter,i],n=params$long))', 'macd <- as.data.frame(last(MACD(store$cl[1:store$iter,i],', '       nFast=params$macdFast, nSlow=params$macdSlow,', '       nSig=params$macdSig, percent=TRUE)))']} />, E(),
    P('It is worth explaining that the result of MACD() is a matrix containing columns, two of which are "macd" and "signal".', 2),
    P('The basic logic of the strategy is therefore that when the short SMA crosses the long SMA and', 5), E(),
    P('What\'s more, if we analyze indicators, if the macd line diverges from the K line, there will be a possible', 3),
    P('In summary, this strategy requires investors to be patient and wait for trade signals to appear, as this', 3), E(),
    L('The charts below show these three indicators clearly on the k-chart.'), E(),
  ],
  /* 5 */ [
    <FigRow $gap={3} $m="-1px 0 0 0">
      <Candle w={78} h={54} seed={11} title="" vol="line" />
      <Candle w={75} h={54} seed={15} title="" vol="line" />
    </FigRow>,
    <Line>series 1{gap(46)}series 7<Ret /></Line>, H('2. Logic and code'), E(8),
    <Light2 pl={18} lines={rMacd} lh={3.5} fs={2.7} />,
    E(), E(), H('Section 1.4 Testing'), H('1. Preliminary testing'), S('1.1 Initial parameter selection and optimization'), L('(1) parameter selection'),
    P('From my perspective, in the double SMA strategy, if the periods of the two SMAs are close together, they will be very prone to entanglement', 8), E(),
  ],
  /* 6 */ [
    P('Since this strategy is backtested on series1 and series7, the following results are taken from stock 1', 2), E(),
    H('1.2 Parameter optimization'), P('First, I use the data from days 1 to 550 as the training set (i.e., in-sample data set), and the data from', 7), E(),
    P('Secondly, I used grid search to find all the combinations of parameters and cross-validation to find the', 2), E(),
    <FigRow $gap={6} $justify="flex-start" $m="1px 0 3px 13px">
      {[1, 2, 3, 4].map(i => <Light2 key={i} pl={0} fs={2.9} lh={5.4} lines={ptable} />)}
    </FigRow>, E(),
    P('It is clear to see that the combination of parameters (8, 58) performs the best, so I used that in the next', 2), E(),
    <FigRow $justify="flex-start" $m="0 0 0 70px"><Light2 pl={0} fs={2.9} lh={5.4} lines={ptable} /></FigRow>, E(),
    H('1.3 ', wave(24), 'and results analysis'), P('The combination of parameters resulting from the above parameter optimization is now used for', 2),
    <Light2 pl={16} lh={5.2} lines={['"macdSMA"=list(shortLookback = trainRes$sma, ', '                 longLookback=60),', '          macdLookback = c(nFast=8, nSlow=26, nSig=9),', '          positions.size = c(1:10, 928:630,3:276,1:1296,1:1605,10:81)),']} />, E(),
    L('Risk metrics, the following pictures are from the in-sample data set.'),
  ],
  /* 7 */ [
    <FigRow $gap={5} $m="0 0 1px 10px"><Backtest w={72} h={27} seed={21} band={[0.6, 0.15]} label="series 1 in-sample" /><Backtest w={70} h={27} seed={22} band={[0.62, 0.3]} label="series 7 in-sample" /></FigRow>,
    <Line>series 1{gap(42)}series 7<Ret /></Line>, L('The following pictures are from out-of-sample data set.'),
    <FigRow $gap={7} $m="3px 0 1px 18px"><Backtest w={66} h={27} seed={23} drift={0.6} label="series 1 out-of-sample" /><Backtest w={70} h={27} seed={24} drift={0.8} band={[0.85, 0.02]} label="series 7 out-of-sample" /></FigRow>,
    <Line>series 1{gap(42)}series 7<Ret /></Line>,
    H('Section ', sel(14)), H('1. Overall reflection'), P('In the code implementation of this strategy, I first considered the use of market order, not limit order,', 4), E(),
    P('Secondly, as this strategy is suitable for trending markets, it does not evaluate well in mean-reversion', 2), E(),
    P('Finally, based on the results of the in-sample, the enhancement values are still large, suggesting that the', 2), E(),
    S('2. Risk management solutions - Stop-loss settings:'), P('There is no stop loss set in this strategy. Throughout the series (in-sample data), the results of the', 7), E(),
    S('Section2 Resistance Support Relative Strength Strategy'), E(), H('Section 2.1 Strategy introduction'), H('Trading strategy Introduction - The concept of support and resistance'),
    P('The resistance is when the price moves up, the highest point reached before it pulled back. It is the', 2), E(), P('The support is when the price fall, the lowest point reaches before it starts back. It is the price level', 2), E(),
  ],
  /* 8 */ [
    H('Section 2.2 Data analysis'), H('1. Common strategy of support and resistance levels --- Bollinger bands'), P('Bollinger Bands is one of the common strategy of resistance and support. The strategy will be long', 3),
    <FigRow $justify="flex-start" $m="-1px 0 1px 5px"><Dark w={175} h={58} bg="#1f1f1f" fs={2.2} lh={3.3} lines={bollCode} /></FigRow>,
    P('How to find an effective resistance or support level is the key to the effective profit strategy. From the', 3), E(),
    H('2. Data analysis and compare'), P('Take Stock 1 as examples, we plotted its K-chart observing its movements and added ATR indicators', 5), E(),
    P('We can see that there is only a clear trend and ATR remains small numbers in stock S1. It experiences', 3),
    <FigRow $gap={8} $m="2px 0 2px 0"><Candle w={66} h={50} seed={31} title="" vol="line" /><Indicators w={68} h={46} seed={32} /></FigRow>,
    P('Following the general trend, the type of "fixed value" strategy is effective and can get returns.', 1),
    <FigRow $m="2px 0 6px 0"><Backtest w={90} h={24} seed={33} drift={0.9} /></FigRow>,
    P('However, at the same time, its disadvantage is also very obvious: time lag. At the middle and of the', 1),
  ],
  /* 9 */ [
    P('BBands is actually a moving average, it cannot respond to multiple changes with fast and sharp trends. In uncertain markets, using this approach means constantly switching between long and short, with', 3),
    <FigRow $gap={8} $m="0 0 2px 0"><Candle w={78} h={49} seed={41} title="" vol="line" /><Indicators w={66} h={48} seed={42} /></FigRow>,
    P('As shown in the figure, for stocks with frequent volatility and high uncertainty(S1), the bollinger bands', 2),
    <FigRow $m="2px 0 4px 0"><Backtest w={90} h={24} seed={43} drift={-0.9} /></FigRow>, E(),
    H('Section 2.3 How the strategy works'), H('1. Inspiration: Resistance Support Relative Strength (RSRS) indicator'), P('Inspired by the Bollinger bands, rather than merely interpreting the resistance and support levels as the', 5), E(),
    L('We illustrate the logic of the relative strength of support resistance according to different market states'), E(),
    L('(1) when the market is rising:'), P('support > resistance, the bull market continues and prices accelerate rise; resistance <', 2, 15),
    L('(2) when the market is volatile:'), <Line $pl={15}>support &gt; resistance, the bull market may be about to start<Ret /></Line>, <Line $pl={15}>resistance &lt; support, a bear market may be about to start<Ret /></Line>,
    L('(3) when the market is going down:'), P('support > resistance, the bear market may be coming to an end and prices will bottom out;', 2, 15), E(), E(),
    H('2.RSRS strategy specify'), H('2.1 Definition of RSRS and quantification of relative intensity'), P('After considering the given data in our project and some existing indicators, we believe that the daily', 2), E(),
  ],
  /* 10 */ [
    P('Daily highs and lows can be considered as the resistance and support level which is recognised by the', 3), E(), P('The relative strength of support and resistance is described by the value of the relative position change,', 2), E(),
    P('delta(high)/delta(low) is the slope of line([N],high[N]) and line([1],high[1]). However, the slope', 4), E(),
    Lc('high = alpha + beta *low + epsilon, epsilon ~ N(0,sigma) (1)', true), E(), P('When the slope is large, it means the support strength is stronger than the resistance strength; otherwise,', 2), E(),
    H('2.2 RSRS index construction'), L('Calculation of everyday slope index:'), L('(1) Take the highest price sequence and the lowest price sequence of the previous N days.'), L('(2) OLS linear regression of the two lists of data(high & low) according to formula (1).'), L('(3) The fitted beta value was taken as the RSRS slope index value of that day.'), E(),
    H('2.3 The RSRS index trading strategy'), P('We use threshold trading logic as the trading framework. We go long when the RSRS exceeds a', 2), E(),
    H('Section 2.4 Testing'), H('1. Preliminary testing'), H('1.1 Initial parameter selection and optimization'), P('The beta is the slope we used. N cannot be taken too little or too large as we want to reflect the current', 3), E(), P('Afterwards, we need to determine the upper and lower thresholds. To find a more reasonable threshold', 3),
    <FigRow $gap={7} $justify="flex-start" $m="2px 0 0 6px"><Hist w={90} h={48} /><TableBox><span>Mean</span><span>0.938</span><span>Standard</span><span>0.168</span><span>Skewness</span><span>0.167</span><span>Kurtosis</span><span>0.838</span></TableBox></FigRow>,
  ],
  /* 11 */ [
    E(), P('From the data, a more reasonable threshold selection is the mean plus and minus a standard deviation,', 1.4), L('Thus, the RSRS slope trading strategy is:'), L('(1) Calculate the RSRS slope.'), L('(2) If the slope is greater than S1, long and hold.'), L('(3) If the slope is less than S2, short and close the position.'), E(),
    <FigRow $justify="flex-start" $m="1px 0"><Dark w={188} h={156} bg="#1d1d1d" fs={2.7} lh={4.4} pad="3px 4px" lines={rStrategy} /></FigRow>, E(),
    H(wave(18), ' and results analysis'), P('To better test our idea, we divided the data into in-sample (1:650) data and out-of-sample (651:1100) data,', 2), E(12),
    <Line $fw={700} $pl={10}>In-sample test{gap(34)}Out-of-sample test<Ret /></Line>,
    <FigRow $gap={14} $justify="flex-start" $m="3px 0 0 3px"><Backtest w={86} h={28} seed={51} drift={0.7} label="ER: PD Ratio: 10.41" /><Backtest w={82} h={27} seed={52} drift={0.7} label="ER: PD Ratio: 8.56" /></FigRow>,
  ],
  /* 12 */ [
    E(), H('Section 2.5 Plan'), H('Standard score optimization'), P('In the above slope threshold trading strategy, the upper and lower thresholds are selected with reference to the', 5), E(),
    P('If we look at different periods of the market, we can see that the mean value of the slope fluctuates', 6), E(),
    L('The improvement of the RSRS standard score strategy is done as follows:'), L('The slope is normalized and used as the indicator value.'), L('1) take the slope time series of the previous M days. S;'), L('2) use this sample to calculate the standard score of the slope of the day.'), E(),
    Lc('RSRS_std = (RSRS - mu) / sigma', true), E(), P('Where M is the mean value of the slope of the previous M days, sigma is the standard deviation of the', 2), E(),
    L('3) The calculated standard score is used as the RSRS standard score indicator value for the day.'), E(8), S('Section3 Multi-factor strategy'), E(),
    H('Section 3.1 Strategy introduction'), P('A multi-factor strategy is a stock-picking strategy by combining several factors for analysis. Factors', 7), E(), P('The key factor in our strategy is modified from the original Alpha 006. The basic logic of this factor is', 3),
  ],
  /* 13 */ [
    P('to find the circumstance of "rise-low" or "low-rise", we multiply the factor by -1, resulting in the following equation:', 2), E(), E(),
    Lc('y = -1 * correlation(close, volume)'), Lc('where observed time = macrosecurity days'), E(), E(),
    H('Section 3.2 Data analysis'), P('Alpha 006 calculates the correlation between the close price and the corresponding volume. Thus, before applying this factor, we must first make sure that there exist some levels of correlation between', 5), E(),
    H('Part 1 - Proven of correlation between close price and volume'), P('We use the following R code to analyze the correlation between the given indicators in stock. Set stock', 2), E(8),
    <Light2 pl={2} lh={5.8} lines={['#Additional -- correlation Analysis', 'Stock <- read.csv("01.csv", nrows=700, sep=",", dec=".", fileEncoding="UTF-8-BOM")', 'head(Stock)', '#Remove the date index', 'Stock <- Stock[,-1]', 'head(Stock)', '#Use of function cor()', 'correlation(Stock, method="pearson")', '#Use of function cor()', 'library(Hmisc)', 'Stock <- as.matrix(Stock)', 'rcorr(Stock)', '#Visualization', 'library(PerformanceAnalytics)', 'chart.Correlation(Stock)']} />, E(12),
    L('We get the display of a correlation between indicators:'),
    <Light2 pl={0} lh={4.2} fs={2.7} lines={['> rcorr(Stock)', '      Open High  Low Close Volume', 'Open  1.00 1.00 1.00  1.00  0.32', 'High  1.00 1.00 1.00  1.00  0.35', 'Low   1.00 1.00 1.00  1.00  0.30', 'Close 1.00 1.00 1.00  1.00  0.32', 'Volume 0.32 0.35 0.30 0.32  1.00']} />, E(),
    L('And a graph that clearly visualized the correlation:'),
  ],
  /* 14 */ [
    <FigRow $m="2px 0 2px 0"><Pairs w={173} h={85} /></FigRow>, E(), P('From the graph displayed, there exist high levels of correlation between indicators of stock 1. By', 4), E(),
    H("Part 2 - The stocks' volatilities and the observed period setting"), P('In the previous section in momentum strategy, we used Python to calculate the volatilities', 3), E(),
    P('For stocks with relatively stable prices, we tend to set the observed period longer so that the decision', 4), E(),
    H('Section 3.3 How the strategy works'), S('1. Original Factor formula'), L('Original Alpha006: (-1 * correlation(open, volume, 10))'), E(), S('2. Factor function description'), P('For correlation(x,y,d) part, the correlation coefficient of two random variables x, y in the past d days,', 3), E(), S('3. Explanation of the formula'), P('First, the correlation between the opening price and the volume of the last 10 trading days is calculated.', 2),
  ],
  /* 15 */ [
    P('is then added as the negative sign, which means that the higher the value of the factor, the lower the', 2), H('2. Formula basis'), P('We observe a phenomenon of securities trading: when a new peak in the price of securities occurs, the', 9), E(8),
    H('3. Strategy Testing'), L('There is a threshold, which is imported in the strategy function from parameters.'), E(),
    P('(1) When the factor value of the day is greater than the threshold, it means that the stock price has', 3), P('(2) When the factor value of the day is less than the threshold, it means that the stock price has reached', 3), P('(3) When the factor value of the day is exactly equal to the threshold, there is not a clear signal to buy', 2), E(),
  ],
  /* 16 */ [
    <Light2 pl={2} lh={3.33} fs={2.7} lines={rOrders} />, E(), H('Section 3.4 Testing'), H('1. Strategy Implementation'), L('We choose the first 500 days as an in-sample test.'), E(),
    <Light2 pl={2} lh={4.8} fs={2.7} lines={['numDays <- nrow(dataList[[1]])', 'inSampDays <- 500', '', '# in-sample period', 'dataList <- lapply(dataList, function(x) x[1:inSampDays])', '', '# out-of-sample period', 'dataList <- lapply(dataList, function(x)', '                  x[(inSampDays+1):numDays])']} />,
  ],
  /* 17 */ [
    E(), P('For example, we set the parameters as thr=1 and nDay=20. In addition, we need to guarantee all series contribute a similar amount to the overall result. Thus we use the knowledge of COMP396 lectures', 3),
    <FigRow $m="1px 0 4px 10px"><Backtest w={142} h={24} seed={61} drift={-1} band={[0.24, 0.76]} /></FigRow>,
    <FigRow $m="0 0 1px 10px"><SmallPanel w={68} h={13.4} gap={1} seeds={[62, 63, 64, 65, 66, 67, 68, 69, 70, 71]} /></FigRow>,
    H('2. Features ', wave(16)), P('By the definition of this formula, the calculation should be based on the previous n days (observed day)', 6), E(), H('Section 3.5 Plan'), P('We have tried to develop a better strategy. But due to some technical or time issues, we are unable to', 2), E(),
    H('1. Inability to determine the optimal threshold'), P('Our first thought for this strategy is to find the optimal threshold. A previous version of the code is to', 9), E(), S('2. The incorrectly chosen of observed day on some occasions'),
  ],
  /* 18 */ [
    P('Another parameter of this strategy, besides the threshold, is the observed day. In this version of strategy design, we calculate the overall volatility of a stock and determine whether to set a long or a short o-', 7), E(),
    S('3. Maybe more factors?'), P('Although this strategy is named a multi-factor strategy, only one factor, which is the modified version of Alpha006, has been used. We have tried to modify and add other factors in the Alpha101 series, but', 7),
    ...rep(6, E), E(8), SP('Section 4 The Combined Strategy'), E(), HP('Section 4.1 Combination methods'), P('We have developed 3 trading strategies, each of which can be traded individually or in combination with the others. Sometimes the combined use of strategies can help traders to better recognise the market.', 5), E(), P('In the performance of strategy 1 and strategy 2, we find that the two strategies show a weak correlation,', 5), E(), P('For example, when the short SMA crosses the long SMA and the macd crosses the macd signal from', 6), E(), P('Alpha strategies are based on a series of alpha factors, each of which determines a position, and the', 4),
  ],
  /* 19 */ [
    P('investment and is a passive investment. Therefore, the third strategy is very flexible and we will run it', 2), E(), P('In summary, the long-term strategy and the multi-factor strategy will work on no ten stocks at the same', 3), E(), L('For the allocation of funds, we plan to use an even distribution of the two strategies initially.'), E(),
    HP('Section 4.2 Risk management'), P('We plan to adopt some risk management approaches to each of our three strategies. Our approach', 2), E(), P('The first part is to analyze the target stock\'s characteristics on the in-sample testing before conducting', 6), E(), P('The second part is to analyze the profit outcome of the in-sample testing. If a strategy performs a', 5), E(), P('The third part is to supervise the performance during the out-sample trading. We calculate and rank the', 7), E(),
    HP('Section 4.3 Position sizing'), H('1. Plans and ideas for position sizing for a single strategy'), P('For the first strategy of momentum strategy with double moving average and MACD indicators, I', 6), E(),
  ],
  /* 20 */ [
    L('The charts demonstrate the in-sample result and out-of-sample results after allocating position sizes.'),
    <FigRow $gap={3} $m="1px 0 1px 0">
      <div><Backtest w={82} h={26} seed={71} band={[0.58, 0.13]} drift={0.2} /><SmallPanel w={40} h={15} gap={1} mt={5} seeds={[72, 73, 74, 75, 76, 77, 78, 79, 80, 81]} /></div>
      <div><Backtest w={82} h={26} seed={82} band={[0.34, 0.3]} drift={0.6} /><SmallPanel w={40} h={15} gap={1} mt={5} seeds={[83, 84, 85, 86, 87, 88, 89, 90, 91, 92]} /></div>
    </FigRow>,
    <Line>in-sample test{gap(44)}out-of-sample test<Ret /></Line>, E(), P('The Resistance Support Relative Strength strategy (short for RSRS strategy), which we have already', 6.5), E(), P('For the multi-factor strategy, its nature is very flexible and can adjust the parameters according to the', 6), E(),
    H('2. For position sizing discussions across strategies'), P('According to the combined strategies we mentioned earlier, finally, the combined stock selection', 7),
  ],
  /* 21 */ [
    P('we also need to analyze the spread between the buy and sell points. If the spread is large, this indicates', 2), E(), P('In addition, according to the capital allocation of our three strategies, through the study of COMP396', 3), E(),
    HP('Section 4.4 Future plan'), P('In the plan, apart from considering the above-mentioned position sizing methods, we also consider', 6), E(), P('In contrast, if an allocation of strategies is based solely on equal weights without attention to the risk', 5), E(), P('In addition, we need to use cross-validation (Cross-validation: evaluating estimator, 2007) to find an', 6), E(),
    SP('Section 5 Breakdown of the teamwork'), E(), HP(wave(16), ' The Background research'), P('-Looking through the suggested academic sources and quantitative strategy websites to choose a', 4), E(), HP('Coding'), P('-In order to show the suitability of momentum strategy to the given stockmarket, I used python and', 2), P('-I am the first one who has completed the code part in our team. I not only use the TTR package in', 3), E(),
  ],
  /* 22 */ [
    HP('Strategy ideas'), P('I have come up with two strategies: TMA strategy and a momentum strategy with double moving', 2), E(), HP('Design presentation and report'), P('Presentation: I will give a presentation about a momentum strategy with double moving average', 2), P('Report: I will write about a momentum strategy with double moving average and MACD indicators', 2), E(), HP(wave(12), ' The background research'), P('I collected and read reputable quantitative strategies on the Datapoint website and research reports', 6), E(),
    HP('Coding'), P('I finished the basic strategy code and wrote the code of the testing part. I used the calculation of CI to', 3), P('-To implement my code, I also learned certain packages in R.', 1), E(), HP('Strategy ideas'), P('I have come up with the strategy "Resistance support relative strength(RSRS) strategy" based on the', 2), P('-I went through and analyzed how are these strategies works as well as features of each, and proposed', 2), E(), HP('Design presentation and report'), L('Presentation: I will explain and answer questions about RSRS strategy.'),
  ],
  /* 23 */ [
    ...Research(), HP(wave(14), ' '), E(),
    P('I read the information that professors suggested and searched a lot of strategies that we may develop', 3), P('I discussed with my group members what development of our strategy and presented the ideas to', 3), E(), HP('Coding'), P('I discussed some examples of strategy. (thank, you), following with my team members and I read two', 2), E(), HP('Strategy ideas'), P('Due to we can discuss a number of strategies, I analysis how each strategy works, its strengths and', 3), P('I wrapped the trend strategy idea for every strategy and decide in the logic to finish it.', 1), E(), HP('Design presentation and report'), P('Presentation: I will introduce the whole content of the report and answer the question about the', 2), P('Report: I am mainly responsible for the whole part, I collected every idea and completed typesetting', 2),
  ],
  /* 24 */ [
    ...Research(), E(20),
  ],
  /* 25 */ [
    ...Research(), HP(wave(14), ' '), E(),
    P('Based on the information Weiyi Liu had gathered and the advice given on strategies, I selected and', 2), P('After confirming our strategies I wanted to develop with Zhiyu Chen, I found some problems that', 5), E(8), HP('Coding'), P('I worked with Zhiyu Chen on the code for the strategy - Joint-Alpha strategy 101 & Multi-factor', 2), E(), P('-During the writing of the strategy, I would check and modified the code and then implement it in', 2), P('-After we have written the code, I met to compare the returns by trying different parameters, e.g.', 3), E(), E(), HP('Strategy ideas'), P('A summarized some of the potential problems with the multi-factor strategy and thought about what', 3),
  ],
  /* 26 */ [
    ...Research(), E(), HP('Design presentation and report'), P('Presentation: I will explain and answer questions about alpha 101 factor/Alpha strategy. Report:', 2), E(8), HP(wave(14), ' '), E(), P('To support the other team members of the group in the subsequent development of the strategy, I have', 4), E(), HP('Coding'), P('I used R-Studio and PyCharm to do basic data analysis and find the characteristics of each stock', 5), P('I used R code to do code analysis and finished the data analysis part of the multi-factor strategy. I', 4), E(),
  ],
  /* 27 */ [
    ...Research(), HP('Strategy ideas'), P('I pick an alpha006 as the factor to conduct to the stock among the 101 found strategies. I optimized the', 4), E(), HP('Design presentation and report'), P('Presentation: I will explain and answer questions about alpha 101. Report:', 2), E(8),
  ],
  /* 28 */ [
    H('Section6 Reference list'), E(),
    P('Chen, J. (2021). What Is the Volume Price Trend (VPT) Trading Indicator. Available at:', 1), <Line><Link as="span">https://www.investopedia.com/terms/v/vptindicator.asp</Link> (Accessed: 11 November 2022).<Ret /></Line>, E(),
    L('Chen, J. (2021) Risk Parity: Definition, Strategies, Example. Available at:'), <Line>{sel(95)} (Accessed: 11 November 2022).<Ret /></Line>, E(),
    L('Cross-validation: evaluating estimator (2007) Available at:'), <Line>{sel(110)} (Accessed: 11 November 2022).<Ret /></Line>, E(),
    L('Dolan, B. (2022) MACD Indicator Explained, with Formula, Examples and Limitations. Available'), <Line>at <Link as="span">https://www.investopedia.com/terms/m/macd.asp</Link> (Accessed: 14 Nov 2022).<Ret /></Line>, E(),
    L('La Perla, Michele. (2019). "Generating Trading Signals using Dual Moving Average Crossover'), L('Strategy" [e-journal] available at:'), <Line>{sel(186)}</Line>, <Link>ottos-Average-Crossover-Strategy</Link>, L('(Accessed: 1st Dec 2022)'),
  ],
]

const PageView = ({ n, blocks }) => (
  <PageSheet>
    <HeadWrap>
      <Corner />
      <HeadInner>
        <PageHead><span>COMP396 Design Report</span><span>Team</span></PageHead>
      </HeadInner>
      <Corner />
    </HeadWrap>
    <PageBody>{React.Children.toArray(blocks)}</PageBody>
    <PageFoot>
      <Corner />
      <span>{n} / 28</span>
      <Corner />
    </PageFoot>
  </PageSheet>
)

const tabs = ['插入', '绘图', '设计', '布局', '引用', '邮件', '审阅']

export default function App() {
  return (
    <Shell>
      <GlobalStyle />
      <TitleBar>
        <Light $ml={14} $c="#ed6a5e" />
        <Light $ml={16} $c="#f5bf4f" />
        <Light $ml={16} $c="#61c554" />
        <AutoSave>自动保存</AutoSave>
        <Toggle>关闭</Toggle>
        <Tool $w={28} $ml={26}><HomeIcon /></Tool>
        <Tool $w={28} $ml={26}><SaveIcon /></Tool>
        <Tool $w={28} $ml={28}><UndoIcon /></Tool>
        <Chev ml={18} c="#6d6d6d" />
        <Tool $w={32} $ml={18}><RedoIcon /></Tool>
        <Tool $w={31} $ml={22}><PrintIcon /></Tool>
        <Dots>•••</Dots>
        <Tool $w={24} $ml={32}><DocIcon /></Tool>
        <DocTitle>COMP396 Design report</DocTitle>
        <Saved>— 已保存</Saved>
        <Chev ml={10} c="#777" />
        <Tool $w={28} $ml={489}><SearchIcon /></Tool>
        <Tool $w={37} $ml={37}><PeopleIcon /></Tool>
      </TitleBar>

      <Tabs>
        <Tab $active>开始</Tab>
        {tabs.map(t => <Tab key={t}>{t}</Tab>)}
        <Tab $mr={35}>视图</Tab>
        <BulbIcon />
        <Tab $ml={18} $mr={0}>告诉我</Tab>
        <HeadButton $w={113} $ml={598}><ShareIcon />共享</HeadButton>
        <HeadButton $w={114} $ml={20}><CommentIcon />批注</HeadButton>
      </Tabs>

      <Ribbon>
        <Group $w={173} $row>
          <BigCol $w={70} $ml={22} $pt={11} $gap={8} $start>
            <PasteIcon />
            <BigLabel $ml={12}>粘贴</BigLabel>
          </BigCol>
          <Chev ml={-6} />
          <BigCol $w={32} $ml={10} $pt={6} $gap={12}>
            <ScissorsIcon />
            <CopyIcon />
            <BrushIcon />
          </BigCol>
        </Group>
        <Sep />

        <Group $w={745}>
          <ToolRow $h={47} $mt={10} $pl={19}>
            <Select $w={198}>Times New...<Chev /></Select>
            <Select $w={108} $ml={4}>12<Chev /></Select>
            <Tool $w={30} $ml={14}><GrowIcon w={31} s={36} up /></Tool>
            <Tool $w={27} $ml={25}><GrowIcon w={28} s={30} /></Tool>
            <Sep $h={36} $ml={25} />
            <Tool $w={33} $ml={24}><Glyph $s={29}>Aa</Glyph></Tool>
            <Chev ml={12} />
            <Sep $h={36} $ml={23} />
            <Tool $w={32} $ml={23}><ClearIcon /></Tool>
            <Tool $w={36} $ml={19}><AbcIcon /></Tool>
            <Tool $w={32} $ml={17}><BoxA /></Tool>
          </ToolRow>
          <ToolRow $h={48} $mt={17} $pl={19}>
            <Tool $w={47} $hh={48} $on><Glyph $s={28} $fw={700} $c="#cfcfcf">B</Glyph></Tool>
            <Tool $w={13} $ml={23}><Glyph $s={28} $it $serif $c="#d4d4d4">I</Glyph></Tool>
            <UnderTool $w={19} $ml={35}><Glyph $s={26}>U</Glyph></UnderTool>
            <Chev ml={21} />
            <Tool $w={30} $ml={19}><StrikeAb /></Tool>
            <Tool $w={24} $ml={29}><ScriptX /></Tool>
            <Tool $w={24} $ml={29}><ScriptX up /></Tool>
            <Sep $h={36} $ml={24} />
            <Tool $w={32} $ml={23}><BlueA /></Tool>
            <Chev ml={13} />
            <Tool $w={32} $ml={18}><MarkerIcon /></Tool>
            <Chev ml={13} />
            <Tool $w={32} $ml={19}><RedA /></Tool>
            <Chev ml={14} />
            <Tool $w={32} $ml={18}><GreyA /></Tool>
            <Tool $w={32} $ml={20}><CharCircle /></Tool>
          </ToolRow>
        </Group>
        <Sep />

        <Group $w={439}>
          <ToolRow $h={30} $mt={6}>
            <Tool $w={30} $ml={26}><BulletsIcon /></Tool>
            <Chev ml={13} />
            <Tool $w={30} $ml={17}><NumbersIcon /></Tool>
            <Chev ml={14} />
            <Tool $w={30} $ml={16}><MultiIcon /></Tool>
            <Chev ml={14} />
            <Sep $h={36} $ml={22} />
            <Tool $w={28} $ml={24}><IndentIcon /></Tool>
            <Tool $w={28} $ml={20}><IndentIcon flip /></Tool>
          </ToolRow>
          <ToolRow $h={40} $mt={10}>
            <Tool $w={29} $ml={27}><AlignIcon mode="left" /></Tool>
            <Tool $w={44} $hh={40} $ml={12} $on><AlignIcon mode="center" /></Tool>
            <Tool $w={29} $ml={11}><AlignIcon mode="right" /></Tool>
            <Tool $w={29} $ml={20}><AlignIcon mode="full" /></Tool>
            <Tool $w={31} $ml={17}><DistIcon /></Tool>
            <Sep $h={36} $ml={23} />
            <Tool $w={33} $ml={22}><SpacingIcon /></Tool>
            <Chev ml={11} />
          </ToolRow>
          <ToolRow $h={30} $mt={8}>
            <Tool $w={33} $ml={26}><FillIcon /></Tool>
            <Chev ml={10} />
            <Tool $w={30} $ml={17}><BordersIcon /></Tool>
            <Chev ml={14} />
            <Sep $h={36} $ml={23} />
            <Tool $w={32} $ml={21}><DirIcon /></Tool>
            <Chev ml={11} />
            <Sep $h={36} $ml={23} />
            <Tool $w={33} $ml={21}><SortIcon /></Tool>
            <Sep $h={36} $ml={20} />
            <Tool $w={33} $ml={22}><RtlIcon /></Tool>
          </ToolRow>
        </Group>
        <Sep />

        <Group $w={212} $row>
          <BigCol $w={60} $ml={27} $gap={8} $pt={14}>
            <StylesIcon />
            <BigLabel>样式</BigLabel>
          </BigCol>
          <ToolRow $h={58} $mt={14}><Chev ml={10} /></ToolRow>
          <BigCol $w={60} $ml={18} $gap={12} $pt={10}>
            <PaneIcon />
            <BigLabel>样式<br />窗格</BigLabel>
          </BigCol>
        </Group>
        <Sep />
        <Group $w={112} $row>
          <BigCol $w={46} $ml={33} $gap={10} $pt={8}>
            <MicIcon />
            <BigLabel>听写</BigLabel>
          </BigCol>
        </Group>
        <Sep />
        <Group $w={120} $row>
          <BigCol $w={64} $ml={24} $gap={10} $pt={7}>
            <EditorIcon />
            <BigLabel>编辑器</BigLabel>
          </BigCol>
        </Group>
      </Ribbon>

      <Viewport>
        <PageGrid>
          {pages.map((blocks, i) => <PageView key={i} n={i + 1} blocks={blocks} />)}
        </PageGrid>
      </Viewport>

      <GreyGap />
      <StatusBar>
        <StatusText $ml={38}>第 1 页，共 28 页</StatusText>
        <StatusText $ml={43}>7504 个字</StatusText>
        <StatusIcon $ml={38}><BookIcon /></StatusIcon>
        <StatusText $ml={36}>中文 (中国)</StatusText>
        <StatusIcon $ml={36}><AccessIcon /></StatusIcon>
        <StatusText $ml={8}>辅助功能: 不可用</StatusText>
        <StatusIcon $ml={144}><FocusIcon /></StatusIcon>
        <StatusText $ml={14}>专注</StatusText>
        <ViewOn><PrintView /></ViewOn>
        <StatusIcon $ml={19}><WebView /></StatusIcon>
        <StatusIcon $ml={39}><OutlineView /></StatusIcon>
        <StatusIcon $ml={42}><DraftView /></StatusIcon>
        <StatusIcon $ml={39}><Svg w={16} h={6} c="#e4e4e4" sw={4}><path d="M0 3 H16" /></Svg></StatusIcon>
        <Slider />
        <StatusIcon $ml={14}><Svg w={18} h={18} c="#e8e8e8" sw={4}><path d="M0 9 H18 M9 0 V18" /></Svg></StatusIcon>
        <StatusText $ml={37}>20%</StatusText>
      </StatusBar>
    </Shell>
  )
}
